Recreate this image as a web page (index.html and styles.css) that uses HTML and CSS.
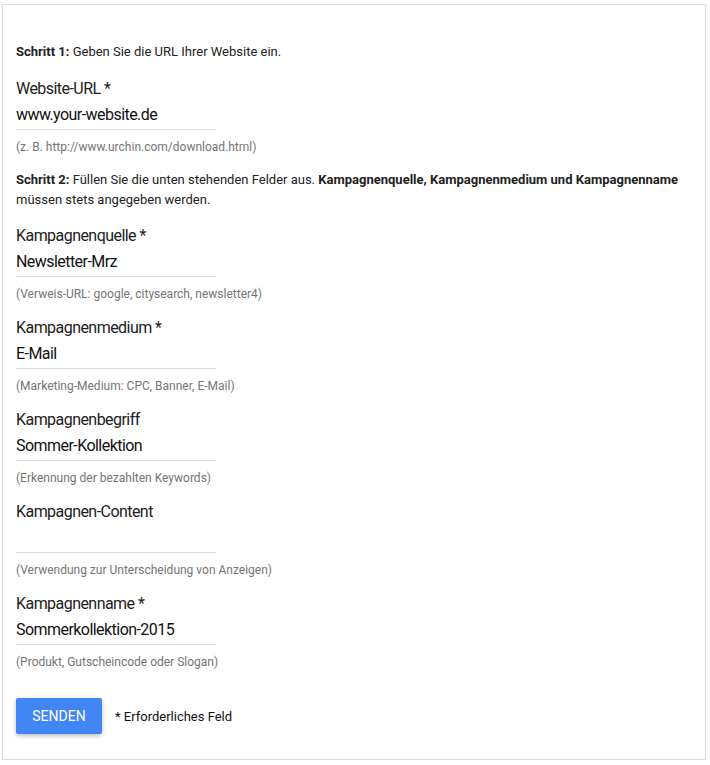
FILE: index.html
```html
<!DOCTYPE html>
<html lang="de">

<head>
    <meta charset="utf-8">
    <meta name="viewport" content="width=device-width, initial-scale=1.0">
    <title>Kampagnen-URL-Builder</title>
    <link rel="stylesheet" href="styles.css">
</head>

<body>
    <form class="builder">
        <p class="schritt"><b>Schritt 1:</b> Geben Sie die URL Ihrer Website ein.</p>

        <div class="feld">
            <label for="url">Website-URL *</label>
            <input id="url" type="text" value="www.your-website.de">
            <p class="hinweis">(z. B. http://www.urchin.com/download.html)</p>
        </div>

        <p class="schritt"><b>Schritt 2:</b> Füllen Sie die unten stehenden Felder aus. <b>Kampagnenquelle, Kampagnenmedium und Kampagnenname</b> müssen stets angegeben werden.</p>

        <div class="feld">
            <label for="quelle">Kampagnenquelle *</label>
            <input id="quelle" type="text" value="Newsletter-Mrz">
            <p class="hinweis">(Verweis-URL: google, citysearch, newsletter4)</p>
        </div>

        <div class="feld">
            <label for="medium">Kampagnenmedium *</label>
            <input id="medium" type="text" value="E-Mail">
            <p class="hinweis">(Marketing-Medium: CPC, Banner, E-Mail)</p>
        </div>

        <div class="feld">
            <label for="begriff">Kampagnenbegriff</label>
            <input id="begriff" type="text" value="Sommer-Kollektion">
            <p class="hinweis">(Erkennung der bezahlten Keywords)</p>
        </div>

        <div class="feld">
            <label for="content">Kampagnen-Content</label>
            <input id="content" type="text" value="">
            <p class="hinweis">(Verwendung zur Unterscheidung von Anzeigen)</p>
        </div>

        <div class="feld">
            <label for="name">Kampagnenname *</label>
            <input id="name" type="text" value="Sommerkollektion-2015">
            <p class="hinweis">(Produkt, Gutscheincode oder Slogan)</p>
        </div>

        <div class="senden">
            <button type="button">Senden</button>
            <span>* Erforderliches Feld</span>
        </div>
    </form>
</body>

</html>
```

FILE: styles.css
```css
* {
    margin: 0;
    padding: 0;
    box-sizing: border-box;
}

body {
    font-family: Roboto, "Liberation Sans", sans-serif;
    color: #212121;
    background: #fff;
}

/* Rahmen */
.builder {
    margin: 4px 4px 0 2px;
    border: 1px solid #dcdcdc;
    padding: 37px 13px 25px 13px;
}

.schritt {
    font-size: 13px;
    line-height: 20px;
    color: #222;
    margin-bottom: 17px;
}

/* Schritt 2 sitzt etwas enger */
.feld + .schritt {
    margin-top: -1px;
    margin-bottom: 16px;
}

.schritt b {
    font-weight: 700;
}

/* Felder */
.feld {
    margin-bottom: 16px;
}

.feld label {
    display: block;
    font-size: 16px;
    line-height: 20px;
    letter-spacing: -0.55px;
    color: #212121;
}

.feld input {
    display: block;
    width: 200px;
    height: 30px;
    margin-top: 1px;
    border: none;
    border-bottom: 1px solid #dcdcdc;
    font-family: Roboto, "Liberation Sans", sans-serif;
    font-size: 16px;
    letter-spacing: -0.55px;
    color: #111;
    outline: none;
    background: transparent;
}

.hinweis {
    margin-top: 9px;
    font-size: 12px;
    line-height: 16px;
    color: #757575;
}

/* Knopf */
.senden {
    display: flex;
    align-items: center;
    gap: 13px;
    margin-top: 28px;
}

.senden button {
    width: 86px;
    height: 36px;
    border: none;
    border-radius: 2px;
    background-color: #4285f4;
    color: #fff;
    font-family: Roboto, "Liberation Sans", sans-serif;
    font-size: 14px;
    text-transform: uppercase;
    box-shadow: 0 2px 4px rgba(0, 0, 0, .25);
}

.senden span {
    font-size: 13px;
    color: #111;
}
```
